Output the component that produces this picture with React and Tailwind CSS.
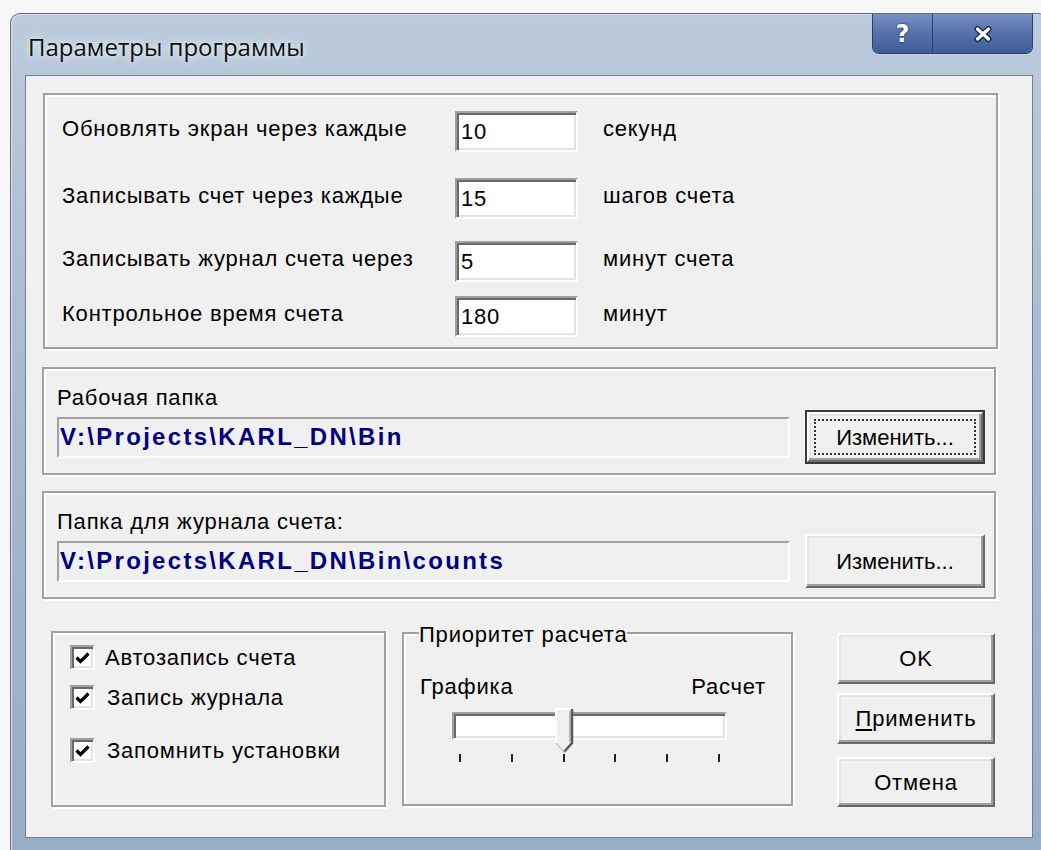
import { useState } from 'react';

const RAISED =
  'flex items-center justify-center bg-[#f0f0f0] border-2 border-t-white border-l-white border-r-[#696969] border-b-[#696969] shadow-[inset_-2px_-2px_0_#a0a0a0,inset_2px_2px_0_#e3e3e3] text-[22px] text-black';
const SUNKEN =
  'border-2 border-t-[#a0a0a0] border-l-[#a0a0a0] border-r-white border-b-white shadow-[inset_2px_2px_0_#696969,inset_-2px_-2px_0_#e3e3e3] bg-white';
const ETCHED = 'border-2 border-[#a0a0a0] shadow-[inset_2px_2px_0_#fff,2px_2px_0_#fff]';

const intervals = [
  { label: 'Обновлять экран через каждые', value: '10', unit: 'секунд', gap: 'mt-[16px]' },
  { label: 'Записывать счет через каждые', value: '15', unit: 'шагов счета', gap: 'mt-[26px]' },
  { label: 'Записывать журнал счета через', value: '5', unit: 'минут счета', gap: 'mt-[22px]' },
  { label: 'Контрольное время счета', value: '180', unit: 'минут', gap: 'mt-[14px]' },
];

function Check({ checked, onToggle }) {
  return (
    <button
      onClick={onToggle}
      className="w-[25px] h-[25px] shrink-0 flex items-center justify-center border-2 border-t-[#a0a0a0] border-l-[#a0a0a0] border-r-white border-b-white shadow-[inset_2px_2px_0_#696969,inset_-2px_-2px_0_#e3e3e3] bg-white"
    >
      {checked && (
        <svg width="15" height="14" viewBox="0 0 15 14">
          <path d="M1.5 6.5 L5.5 10.5 L13.5 2.5" fill="none" stroke="#000" strokeWidth="3.2" />
        </svg>
      )}
    </button>
  );
}

function FolderGroup({ title, path, focused }) {
  return (
    <div className={`${ETCHED} w-[954px] h-[108px] ml-[16px] pl-[13px] pt-[17px]`}>
      <div className="h-[24px] leading-[24px] text-[22px] tracking-[0.8px]">{title}</div>
      <div className="flex items-center">
        <div className="w-[733px] h-[41px] flex items-center pl-[1px] border-2 border-t-[#a0a0a0] border-l-[#a0a0a0] border-r-white border-b-white bg-[#f0f0f0]">
          <span className="text-[24px] font-bold text-[#000080] tracking-[2.3px]">{path}</span>
        </div>
        {focused ? (
          <div className="ml-[15px] w-[180px] h-[54px] p-[2px] bg-[#3a3a3a] flex">
            <div className={`${RAISED} flex-1 p-[5px]`}>
              <div className="flex-1 self-stretch flex items-center justify-center border-2 border-dotted border-[#333]">
                Изменить...
              </div>
            </div>
          </div>
        ) : (
          <button className={`${RAISED} ml-[15px] w-[180px] h-[54px]`}>Изменить...</button>
        )}
      </div>
    </div>
  );
}

export default function App() {
  const [flags, setFlags] = useState([true, true, true]);
  const toggle = i => setFlags(f => f.map((v, j) => (j === i ? !v : v)));

  const checks = [
    { label: 'Автозапись счета', gap: 'mt-[12px]', pad: 'ml-[10px]' },
    { label: 'Запись журнала', gap: 'mt-[15px]', pad: 'ml-[12px]' },
    { label: 'Запомнить установки', gap: 'mt-[28px]', pad: 'ml-[12px]' },
  ];

  return (
    <div className="w-[1041px] h-[850px] overflow-hidden bg-[#f7f7f7] pt-[13px] pl-[10px] font-['Liberation_Sans',Arial,sans-serif] text-black">
      {/* window frame */}
      <div className="w-[1038px] h-[860px] rounded-t-[10px] border border-[#5d6d80] bg-gradient-to-b from-[#bccbdb] via-[#a5b8cc] to-[#98adc4] shadow-[inset_1px_1px_0_#d6e1ec]">
        <div className="h-[61px] flex pr-[14px]">
          <div className="pl-[17px] pt-[15px] text-[24px] font-['Open_Sans',sans-serif] text-[#101010] [text-shadow:0_0_10px_#e6eef6,0_0_4px_#e6eef6]">
            Параметры программы
          </div>
          <div className="ml-auto flex h-[40px] rounded-b-[7px] overflow-hidden border border-t-0 border-[#2b3f6e] shadow-[0_1px_0_#c9d6e4]">
            <div className="w-[60px] flex items-center justify-center bg-gradient-to-b from-[#7890c2] via-[#5672ad] to-[#3e5b98] border-r border-[#2b3f6e]">
              <span className="text-[24px] font-bold text-white font-['DejaVu_Sans',sans-serif] leading-none [text-shadow:0_0_2px_#17264a,0_0_1px_#17264a]">?</span>
            </div>
            <div className="w-[99px] flex items-center justify-center bg-gradient-to-b from-[#7890c2] via-[#5672ad] to-[#3e5b98]">
              <svg width="20" height="18" viewBox="0 0 20 18">
                <path d="M4.5 4 L15.5 14 M15.5 4 L4.5 14" stroke="#1b2b50" strokeWidth="6" strokeLinecap="round" />
                <path d="M4.5 4 L15.5 14 M15.5 4 L4.5 14" stroke="#fff" strokeWidth="3.2" strokeLinecap="round" />
              </svg>
            </div>
          </div>
        </div>

        {/* client area */}
        <div className="ml-[14px] w-[1008px] h-[763px] border border-[#6f8095] bg-[#f0f0f0] flex flex-col">
          <div className={`${ETCHED} mt-[17px] ml-[17px] w-[955px] h-[256px] pl-[17px]`}>
            {intervals.map(row => (
              <div key={row.label} className={`${row.gap} flex items-center h-[41px] text-[22px] tracking-[0.8px]`}>
                <span className="w-[393px] pb-[6px]">{row.label}</span>
                <div className={`${SUNKEN} w-[123px] h-[41px] flex items-center pl-[4px]`}>{row.value}</div>
                <span className="ml-[25px] pb-[6px]">{row.unit}</span>
              </div>
            ))}
          </div>

          <div className="mt-[18px]">
            <FolderGroup title="Рабочая папка" path="V:\Projects\KARL_DN\Bin" focused />
          </div>
          <div className="mt-[16px]">
            <FolderGroup title="Папка для журнала счета:" path="V:\Projects\KARL_DN\Bin\counts" />
          </div>

          <div className="mt-[32px] flex items-start text-[22px] tracking-[0.8px]">
            <div className={`${ETCHED} ml-[25px] w-[335px] h-[176px] pl-[17px]`}>
              {checks.map((c, i) => (
                <div key={c.label} className={`${c.gap} flex items-center h-[25px]`}>
                  <Check checked={flags[i]} onToggle={() => toggle(i)} />
                  <span className={c.pad}>{c.label}</span>
                </div>
              ))}
            </div>

            <div className={`${ETCHED} relative ml-[16px] mt-[1px] w-[391px] h-[174px]`}>
              <span className="absolute -top-[11px] left-[15px] bg-[#f0f0f0] h-[24px] leading-[24px]">Приоритет расчета</span>
              <div className="mt-[41px] h-[24px] leading-[24px] flex justify-between pl-[16px] pr-[25px]">
                <span>Графика</span>
                <span>Расчет</span>
              </div>
              <div className="relative mt-[13px] ml-[48px] w-[275px]">
                <div className={`${SUNKEN} h-[28px]`} />
                <svg className="absolute left-[103px] -top-[4px]" width="19" height="46" viewBox="0 0 19 46">
                  <path d="M1 1 H17 V35 L9 44 L1 35 Z" fill="#f0f0f0" />
                  <path d="M1 35 V1 H17" fill="none" stroke="#fff" strokeWidth="2" />
                  <path d="M17 1 V35 L9 44" fill="none" stroke="#5a5a5a" strokeWidth="2.5" />
                  <path d="M15 3 V34" fill="none" stroke="#a0a0a0" strokeWidth="1.5" />
                  <path d="M1 35 L9 44" fill="none" stroke="#c8c8c8" strokeWidth="1.5" />
                </svg>
                <div className="mt-[14px] px-[7px] flex justify-between">
                  {[0, 1, 2, 3, 4, 5].map(t => (
                    <div key={t} className="w-[2px] h-[8px] bg-[#222]" />
                  ))}
                </div>
              </div>
            </div>

            <div className="ml-[44px] mt-[2px] w-[158px] flex flex-col">
              <button className={`${RAISED} h-[51px]`}>OK</button>
              <button className={`${RAISED} h-[51px] mt-[9px]`}>
                <span className="underline underline-offset-[3px]">П</span>рименить
              </button>
              <button className={`${RAISED} h-[50px] mt-[13px]`}>Отмена</button>
            </div>
          </div>
        </div>
      </div>
    </div>
  );
}
